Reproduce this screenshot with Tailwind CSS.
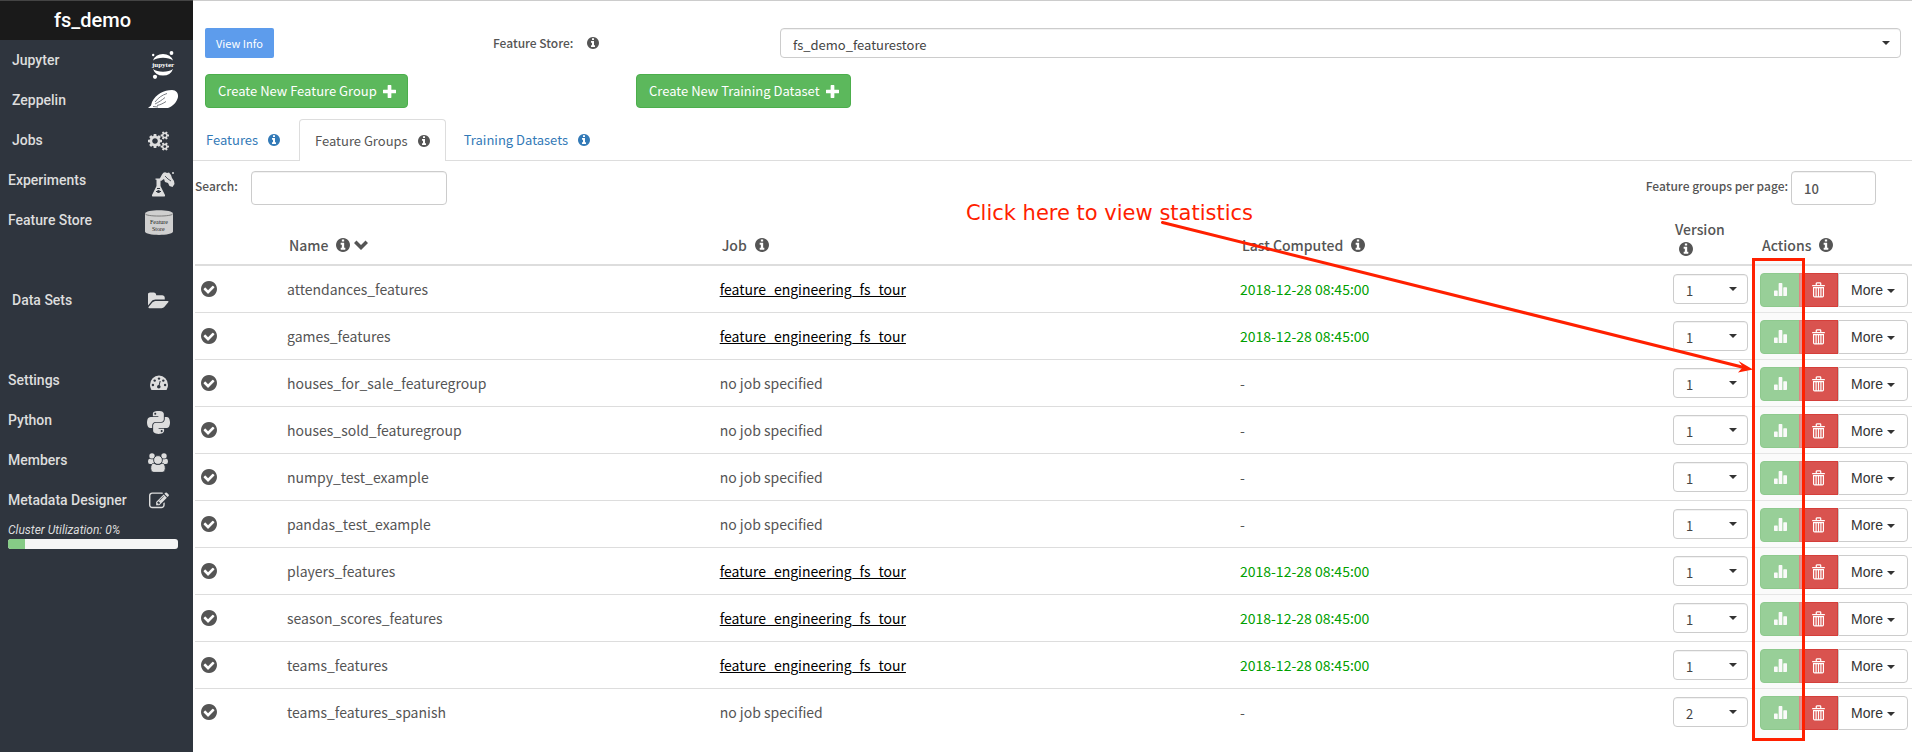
<!DOCTYPE html>
<html lang="en">
<head>
<meta charset="utf-8">
<title>fs_demo</title>
<script src="https://cdn.jsdelivr.net/npm/@tailwindcss/browser@4"></script>
</head>
<body class="bg-white font-['Noto_Sans_CJK_SC','Noto_Sans',sans-serif] text-[#555555] text-[13px] leading-5">
<svg class="hidden" aria-hidden="true">
  <symbol id="info" viewBox="128 128 1536 1536"><path fill="currentColor" d="M1152 1376v-160q0-14-9-23t-23-9h-96v-512q0-14-9-23t-23-9h-320q-14 0-23 9t-9 23v160q0 14 9 23t23 9h96v320h-96q-14 0-23 9t-9 23v160q0 14 9 23t23 9h448q14 0 23-9t9-23zm-128-896v-160q0-14-9-23t-23-9h-192q-14 0-23 9t-9 23v160q0 14 9 23t23 9h192q14 0 23-9t9-23zm640 416q0 209-103 385.5t-279.5 279.5-385.5 103-385.5-103-279.5-279.5-103-385.5 103-385.5 279.5-279.5 385.5-103 385.5 103 279.5 279.5 103 385.5z"/></symbol>
  <symbol id="check" viewBox="128 128 1536 1536"><path fill="currentColor" d="M1412 734q0-28-18-46l-91-90q-19-19-45-19t-45 19l-408 407-226-226q-19-19-45-19t-45 19l-91 90q-18 18-18 46 0 27 18 45l362 362q19 19 45 19 27 0 46-19l543-543q18-18 18-45zm252 162q0 209-103 385.5t-279.5 279.5-385.5 103-385.5-103-279.5-279.5-103-385.5 103-385.5 279.5-279.5 385.5-103 385.5 103 279.5 279.5 103 385.5z"/></symbol>
  <symbol id="plus" viewBox="0 0 14 14"><path fill="currentColor" d="M5 .5q0-.5.5-.5h3q.5 0 .5.5V5h4.500q.5 0 .5.5v3q0 .5-.5.5H9v4.500q0 .5-.5.5h-3q-.5 0-.5-.5V9H.5Q0 9 0 8.500v-3Q0 5 .5 5H5z"/></symbol>
  <symbol id="chevron" viewBox="0 0 14 10"><path fill="currentColor" d="M0 3 2.500.5 7 5 11.500.5 14 3 7 10z"/></symbol>
  <symbol id="caret" viewBox="0 0 8 4"><path fill="currentColor" d="M0 0h8L4 4z"/></symbol>
  <symbol id="bars" viewBox="0 0 14 14"><path fill="currentColor" d="M0 8.700Q0 8 .7 8h2.600q.7 0 .7.7V14H.7Q0 14 0 13.300zM5 .7Q5 0 5.700 0h2.600Q9 0 9 .7V14H5zM10 5.200q0-.7.7-.7h2.600q.7 0 .7.7v8.100q0 .7-.7.7H10z"/></symbol>
  <symbol id="trash" viewBox="0 0 14 17"><path fill="none" stroke="currentColor" stroke-width="1.300" d="M.2 3.700h13.600M4.600 3.300V1.500q0-.6.6-.6h3.600q.6 0 .6.6v1.800M1.700 5.900h10.600v8.900q0 1.200-1.100 1.200H2.800q-1.100 0-1.100-1.200zM4.400 6v9.500M7 6v9.500M9.600 6v9.500"/></symbol>
</svg>
<div class="flex min-h-screen">
  <nav class="w-[193px] shrink-0 bg-[#2f353e] text-[#dddddd] font-['Roboto',sans-serif] font-medium text-[14px]" aria-label="Project">
    <h1 class="h-10 border-t border-[#444444] bg-[#1a1a1a] pr-2 text-center text-xl leading-[38px] font-medium text-white">fs_demo</h1>
    <ul>
      <li><a href="#" class="flex h-10 items-center justify-between pl-3 pr-4">Jupyter
        <svg class="mt-2.5 mr-0.5 h-7 w-6" viewBox="0 0 24 28" fill="#fff"><path d="M2 9.500a10.500 9.500 0 0 1 20 0 12.500 7 0 0 0-20 0zM2 18a10.500 9.500 0 0 0 20 0 12.500 7 0 0 1-20 0z"/><circle cx="20.500" cy="2" r="1.900"/><circle cx="2.200" cy="4" r="1.200"/><circle cx="4" cy="25.800" r="2.100"/><text x="1" y="15.500" font-family="Liberation Serif" font-weight="bold" font-size="7">jupyter</text></svg></a></li>
      <li><a href="#" class="flex h-10 items-center justify-between pl-3 pr-3.5">Zeppelin
        <svg class="mb-0.5 h-5 w-8" viewBox="0 0 32 20"><path fill="#fff" d="M5 13C9 5 17 1 25 1c4 0 6.500 3 6 7-1 5-5 9-10 11H1l3-2.500z"/><path d="M8 13C11 9 15 6 20 4.500M8 15C12 13 15 11 18 8.500M10 16.500c4-1 6-2 9-4M6 17.500l5 .5" stroke="#6a6e75" stroke-width=".9" fill="none"/></svg></a></li>
      <li><a href="#" class="flex h-10 items-center justify-between pl-3 pr-6">Jobs
        <svg class="mt-0.5 h-5 w-[21px]" viewBox="-64 0 1920 1792" fill="currentColor"><path d="M832 896q0-106-75-181t-181-75-181 75-75 181 75 181 181 75 181-75 75-181zm768 512q0-52-38-90t-90-38-90 38-38 90q0 53 37.500 90.500t90.500 37.500 90.500-37.500 37.500-90.500zm0-1024q0-52-38-90t-90-38-90 38-38 90q0 53 37.500 90.500t90.500 37.500 90.500-37.500 37.500-90.500zm-384 421v185q0 10-7 19.500t-16 10.500l-155 24q-11 35-32 76 34 48 90 115 7 10 7 20 0 12-7 19-23 30-82.500 89.500t-78.500 59.500q-11 0-21-7l-115-90q-37 19-77 31-11 108-23 155-7 24-30 24h-186q-11 0-20-7.500t-10-17.500l-23-153q-34-10-75-31l-118 89q-7 7-20 7-11 0-21-8-144-133-144-160 0-9 7-19 10-14 41-53t47-61q-23-44-35-82l-152-24q-10-1-17-9.500t-7-19.500v-185q0-10 7-19.500t16-10.500l155-24q11-35 32-76-34-48-90-115-7-11-7-20 0-12 7-20 22-30 82-89t79-59q11 0 21 7l115 90q34-18 77-32 11-108 23-154 7-24 30-24h186q11 0 20 7.500t10 17.500l23 153q34 10 75 31l118-89q8-7 20-7 11 0 21 8 144 133 144 160 0 9-7 19-12 16-42 54t-45 60q23 48 34 82l152 23q10 2 17 10.500t7 19.500zm640 533v140q0 16-149 31-12 27-30 52 51 113 51 138 0 4-4 7-122 71-124 71-8 0-46-47t-52-68q-20 2-30 2t-30-2q-14 21-52 68t-46 47q-2 0-124-71-4-3-4-7 0-25 51-138-18-25-30-52-149-15-149-31v-140q0-16 149-31 13-29 30-52-51-113-51-138 0-4 4-7 4-2 35-20t59-34 30-16q8 0 46 46.500t52 67.500q20-2 30-2t30 2q51-71 92-112l6-2q4 0 124 70 4 3 4 7 0 25-51 138 17 23 30 52 149 15 149 31zm0-1024v140q0 16-149 31-12 27-30 52 51 113 51 138 0 4-4 7-122 71-124 71-8 0-46-47t-52-68q-20 2-30 2t-30-2q-14 21-52 68t-46 47q-2 0-124-71-4-3-4-7 0-25 51-138-18-25-30-52-149-15-149-31v-140q0-16 149-31 13-29 30-52-51-113-51-138 0-4 4-7 4-2 35-20t59-34 30-16q8 0 46 46.500t52 67.500q20-2 30-2t30 2q51-71 92-112l6-2q4 0 124 70 4 3 4 7 0 25-51 138 17 23 30 52 149 15 149 31z"/></svg></a></li>
      <li><a href="#" class="flex h-10 items-center justify-between pl-2 pr-[18px]">Experiments
        <svg class="mt-2 h-[26px] w-6" viewBox="0 0 24 26" fill="currentColor"><path d="M4.500 7.500h6v1.200h-1V15l4.500 9q.5 1.500-1 1.500H2Q.5 25.500 1 24l4.500-9V8.700h-1z"/><path d="M11 3.500Q13 0 16 2l2-.5 2 2.500 1 3 2 3 .5 3-2 3-3-1-1.500-3-3-1-1-3-3 2-2-1z"/><circle cx="22" cy="2" r="1"/><path d="M5 20.500h5M6 17.500h3" stroke="#2f353e"/><circle cx="7.500" cy="20.500" r="1.600" fill="#2f353e"/><path d="M14 5l3 3 3 2" stroke="#2f353e" stroke-width=".8" fill="none"/></svg></a></li>
      <li><a href="#" class="flex h-10 items-center justify-between pl-2 pr-5">Feature Store
        <svg class="mt-1 h-[25px] w-7" viewBox="0 0 28 25"><path fill="#cfcfcf" d="M0 3.500C0-1 28-1 28 3.500v18c0 4.500-28 4.500-28 0z"/><path fill="none" stroke="#666" stroke-width=".8" d="M.4 3.800c0 3 27.200 3 27.200 0"/><text x="5" y="13.500" font-family="Liberation Serif" font-size="6" fill="#222">Feature</text><text x="7" y="20.500" font-family="Liberation Serif" font-size="6" fill="#222">Store</text></svg></a></li>
      <li class="mt-10"><a href="#" class="flex h-10 items-center justify-between pl-3 pr-6">Data Sets
        <svg class="mt-0.5 h-5 w-[21px]" viewBox="-24 0 1872 1792" fill="currentColor"><path d="M1815 952q0 31-31 66l-336 396q-43 51-120.500 86.500t-143.500 35.500h-1088q-34 0-60.500-13t-26.500-43q0-31 31-66l336-396q43-51 120.500-86.500t143.500-35.500h1088q34 0 60.500 13t26.500 43zm-343-344v160h-832q-94 0-197 47.500t-164 119.500l-337 396-5 6q0-4-.5-12.500t-.5-12.500v-960q0-92 66-158t158-66h320q92 0 158 66t66 158v32h544q92 0 158 66t66 158z"/></svg></a></li>
      <li class="mt-10"><a href="#" class="flex h-10 items-center justify-between pl-2 pr-6">Settings
        <svg class="mt-1 h-[15px] w-5" viewBox="0 0 20 15"><path fill="currentColor" d="M1 10a9 9.500 0 0 1 18 0q0 2.500-1.200 4.500-.2.500-.8.500H3q-.6 0-.8-.5Q1 12.500 1 10z"/><g fill="#2f353e"><circle cx="3.900" cy="10" r="1.200"/><circle cx="5.700" cy="5.600" r="1.200"/><circle cx="10" cy="3.600" r="1.200"/><circle cx="14.300" cy="5.600" r="1.200"/><circle cx="16.100" cy="10" r="1.200"/><circle cx="9.800" cy="11.800" r="1.800"/></g><path stroke="#2f353e" d="M9.800 11.500 11.200 6"/></svg></a></li>
      <li><a href="#" class="flex h-10 items-center justify-between pl-2 pr-[23px]">Python
        <svg class="mt-1 h-[23px] w-[23px]" viewBox="0 31 448 450" preserveAspectRatio="none" fill="currentColor"><path d="M439.800 200.500c-7.700-30.900-22.300-54.200-53.400-54.200h-40.100v47.400c0 36.800-31.200 67.800-66.800 67.800H172.700c-29.200 0-53.400 25-53.400 54.300v101.800c0 29 25.200 46 53.400 54.300 33.800 9.900 66.300 11.700 106.800 0 26.900-7.800 53.400-23.500 53.400-54.300v-40.700H226.200v-13.600h160.200c31.100 0 42.600-21.700 53.400-54.200 11.200-33.500 10.700-65.700 0-108.600zM286.200 404c11.100 0 20.100 9.100 20.100 20.300 0 11.300-9 20.400-20.100 20.400-11 0-20.100-9.200-20.100-20.400.1-11.300 9.100-20.300 20.100-20.300zM167.800 248.100h106.800c29.700 0 53.400-24.500 53.400-54.300V91.900c0-29-24.400-50.700-53.400-55.600-35.800-5.900-74.700-5.600-106.800.1-45.200 8-53.400 24.700-53.400 55.600v40.700h106.900v13.600h-147c-31.100 0-58.300 18.700-66.800 54.200-9.800 40.700-10.200 66.100 0 108.600 7.600 31.600 25.700 54.200 56.800 54.200H101v-48.800c0-35.300 30.500-66.400 66.800-66.400zm-6.700-142.600c-11.100 0-20.100-9.100-20.100-20.300.1-11.300 9-20.400 20.100-20.400 11 0 20.100 9.200 20.100 20.400s-9 20.300-20.100 20.300z"/></svg></a></li>
      <li><a href="#" class="flex h-10 items-center justify-between pl-2 pr-[25px]">Members
        <svg class="mt-1 h-[19px] w-5" viewBox="0 0 20 19"><g fill="currentColor"><circle cx="4" cy="2.900" r="2.700"/><circle cx="16" cy="2.900" r="2.700"/><path d="M0 8.500Q0 5.500 1.800 5.700q2.700 1.200 4.800 0L8 11H2Q0 11 0 8.500zM20 8.500q0-3-1.800-2.800-2.700 1.200-4.800 0L12 11h6q2 0 2-2.500z"/></g><g fill="currentColor" stroke="#2f353e" stroke-width=".9"><path d="M2.700 15.500q0-5 3-5.200Q10 13 14.300 10.300q3 .2 3 5.200 0 3.900-3 3.900H5.700q-3 0-3-3.900z"/><circle cx="10" cy="7" r="4.400"/></g></svg></a></li>
      <li><a href="#" class="flex h-10 items-center justify-between pl-2 pr-6">Metadata Designer
        <svg class="mt-0.5 h-5 w-5" viewBox="0 0 1792 1792" fill="currentColor"><path d="M888 1184l116-116-152-152-116 116v56h96v96h56zm440-720q-16-16-33 1l-350 350q-17 17-1 33t33-1l350-350q17-17 1-33zm80 594v190q0 119-84.500 203.500t-203.500 84.500h-832q-119 0-203.500-84.500t-84.500-203.500v-832q0-119 84.500-203.500t203.500-84.500h832q63 0 117 25 15 7 18 23 3 17-9 29l-49 49q-14 14-32 8-23-6-45-6h-832q-66 0-113 47t-47 113v832q0 66 47 113t113 47h832q66 0 113-47t47-113v-126q0-13 9-22l64-64q15-15 35-7t20 29zm-96-738l288 288-672 672h-288v-288zm444 132l-92 92-288-288 92-92q28-28 68-28t68 28l152 152q28 28 28 68t-28 68z"/></svg></a></li>
    </ul>
    <div class="pl-2 pr-[15px]">
      <p class="pt-0.5 text-xs leading-[17px] font-normal italic">Cluster Utilization: 0%</p>
      <div class="h-2.5 overflow-hidden rounded-[3px] bg-[#f5f5f5]" role="progressbar" aria-valuenow="0"><div class="h-full w-1/10 bg-[#86cb86]"></div></div>
    </div>
  </nav>

  <main class="relative min-w-0 flex-1 border-t border-[#cccccc]">
    <div class="mt-[27px] flex items-center pl-3 pr-[11px]">
      <div class="w-[288px]"><button class="h-[30px] rounded-xs bg-[#5d9cec] px-[11px] text-[11px] text-white">View Info</button></div>
      <label for="store" class="flex w-[287px] items-center gap-3.5 text-[12px] font-medium">Feature Store: <svg class="size-3"><use href="#info"/></svg></label>
      <div class="relative flex-1">
        <select id="store" class="h-[30px] w-full appearance-none rounded-[4px] border border-[#cccccc] bg-white px-3 pt-1 text-[13px] text-[#444444] inset-shadow-2xs"><option>fs_demo_featurestore</option></select>
        <svg class="pointer-events-none absolute top-[13px] right-[11px] h-1 w-2 text-[#333333]"><use href="#caret"/></svg>
      </div>
    </div>
    <div class="mt-4 flex pl-3">
      <div class="w-[431px]"><button class="flex h-[34px] items-center gap-1.5 rounded-[4px] border border-[#4cae4c] bg-[#5cb85c] pr-[11px] pl-3 text-white">Create New Feature Group <svg class="size-[13px]"><use href="#plus"/></svg></button></div>
      <button class="flex h-[34px] items-center gap-1.5 rounded-[4px] border border-[#4cae4c] bg-[#5cb85c] pr-[11px] pl-3 text-white">Create New Training Dataset <svg class="size-[13px]"><use href="#plus"/></svg></button>
    </div>
    <div class="mt-[11px] flex border-b border-[#dddddd] text-[#337ab7]">
      <a href="#" class="flex h-[41px] w-[106px] items-center gap-2.5 pl-[13px]">Features <svg class="size-3"><use href="#info"/></svg></a>
      <a href="#" class="-mb-px flex h-[42px] items-center gap-2.5 rounded-t-[4px] border border-b-0 border-[#dddddd] bg-white px-[15px] text-[#555555]">Feature Groups <svg class="size-3"><use href="#info"/></svg></a>
      <a href="#" class="flex h-[41px] items-center gap-2.5 pl-[18px]">Training Datasets <svg class="size-3"><use href="#info"/></svg></a>
    </div>
    <div class="mt-2.5 flex items-center pl-0.5 pr-9 text-[12px] font-medium">
      <label for="search" class="mb-1 w-14">Search:</label>
      <input id="search" type="text" class="h-[34px] w-[196px] rounded-[4px] border border-[#cccccc] px-3 inset-shadow-2xs">
      <label for="perpage" class="mr-[3px] mb-1 ml-auto">Feature groups per page:</label>
      <input id="perpage" type="text" value="10" class="h-[34px] w-[85px] rounded-[4px] border border-[#cccccc] px-3 text-[13px] inset-shadow-2xs">
    </div>
    <div class="pt-3 pl-0.5">
      <table class="w-full table-fixed border-collapse text-[14px]">
        <colgroup><col class="w-[84px]"><col class="w-[25.2%]"><col class="w-[30.3%]"><col><col class="w-[87px]"><col class="w-[160px]"></colgroup>
        <thead>
          <tr class="h-12 border-b-2 border-[#dddddd] text-left align-bottom leading-[18px]">
            <th><span class="sr-only">Status</span></th>
            <th class="pb-2.5 pl-2.5 font-medium"><span class="flex items-center">Name <svg class="ml-2 size-3.5"><use href="#info"/></svg><svg class="ml-1 h-2.5 w-3.5"><use href="#chevron"/></svg></span></th>
            <th class="pb-2.5 pl-2.5 font-medium"><span class="flex items-center gap-2">Job <svg class="size-3.5"><use href="#info"/></svg></span></th>
            <th class="pb-2.5 pl-2.5 font-medium"><span class="flex items-center gap-2">Last Computed <svg class="size-3.5"><use href="#info"/></svg></span></th>
            <th class="pb-2 pl-2.5 font-medium">Version <svg class="mt-1 ml-1 size-3.5"><use href="#info"/></svg></th>
            <th class="pb-2.5 pl-2.5 font-medium"><span class="flex items-center gap-2">Actions <svg class="size-3.5"><use href="#info"/></svg></span></th>
          </tr>
        </thead>
        <tbody id="rows"></tbody>
      </table>
    </div>
    <div class="pointer-events-none absolute top-[257px] right-[107px] h-[483px] w-[53px] border-3 border-[#ff2000] bg-[#f2f2f2]/40"></div>
    <p class="absolute top-[197px] right-[659px] font-['DejaVu_Sans',sans-serif] text-[21px] leading-[30px] whitespace-nowrap text-[#ff2000]">Click here to view statistics</p>
    <svg class="pointer-events-none absolute top-[219px] right-[157px] h-[156px] w-[594px]" viewBox="0 0 594 156"><path d="M1.500 2.500 581 147" stroke="#ff2000" stroke-width="3" stroke-linecap="round" fill="none"/><path d="M592 149.500 577 152.500 582 147 577.500 141z" fill="#ff2000"/></svg>
  </main>
</div>
<script>
const groups = [
  ['attendances_features', true, 1], ['games_features', true, 1], ['houses_for_sale_featuregroup', false, 1],
  ['houses_sold_featuregroup', false, 1], ['numpy_test_example', false, 1], ['pandas_test_example', false, 1],
  ['players_features', true, 1], ['season_scores_features', true, 1], ['teams_features', true, 1], ['teams_features_spanish', false, 2]
];
document.getElementById('rows').innerHTML = groups.map(([name, job, version]) => `
  <tr class="h-[47px] border-t border-[#dddddd]">
    <td class="pl-1.5"><svg class="block size-4"><use href="#check"/></svg></td>
    <td class="pl-2">${name}</td>
    <td class="pl-2">${job ? '<a href="#" class="text-black underline">feature_engineering_fs_tour</a>' : 'no job specified'}</td>
    <td class="pl-2">${job ? '<span class="text-[#00a000]">2018-12-28 08:45:00</span>' : '-'}</td>
    <td class="px-2"><div class="relative w-[75px]">
      <select aria-label="Version of ${name}" class="block h-[30px] w-full appearance-none rounded-[4px] border border-[#cccccc] bg-white px-3 pt-1 text-[13px] text-[#444444] inset-shadow-2xs"><option>${version}</option></select>
      <svg class="pointer-events-none absolute top-[13px] right-[11px] h-1 w-2 text-[#333333]"><use href="#caret"/></svg></div></td>
    <td class="pt-0.5 pl-2"><div class="flex h-[34px] font-['Liberation_Sans',sans-serif] text-[14px]">
      <button aria-label="View statistics" class="flex w-10 items-center justify-center rounded-l-[4px] border border-[#4cae4c] bg-[#5cb85c] text-white"><svg class="size-[13px]"><use href="#bars"/></svg></button>
      <button aria-label="Delete" class="-ml-px flex w-[39px] items-center justify-center border border-[#d43f3a] bg-[#d9534f] text-white"><svg class="h-4 w-[13px]"><use href="#trash"/></svg></button>
      <button class="flex w-[70px] items-center justify-center gap-1 rounded-r-[4px] border border-[#cccccc] bg-white text-[#333333]">More <svg class="mt-0.5 h-1 w-2"><use href="#caret"/></svg></button>
    </div></td>
  </tr>`).join('');
</script>
</body>
</html>
